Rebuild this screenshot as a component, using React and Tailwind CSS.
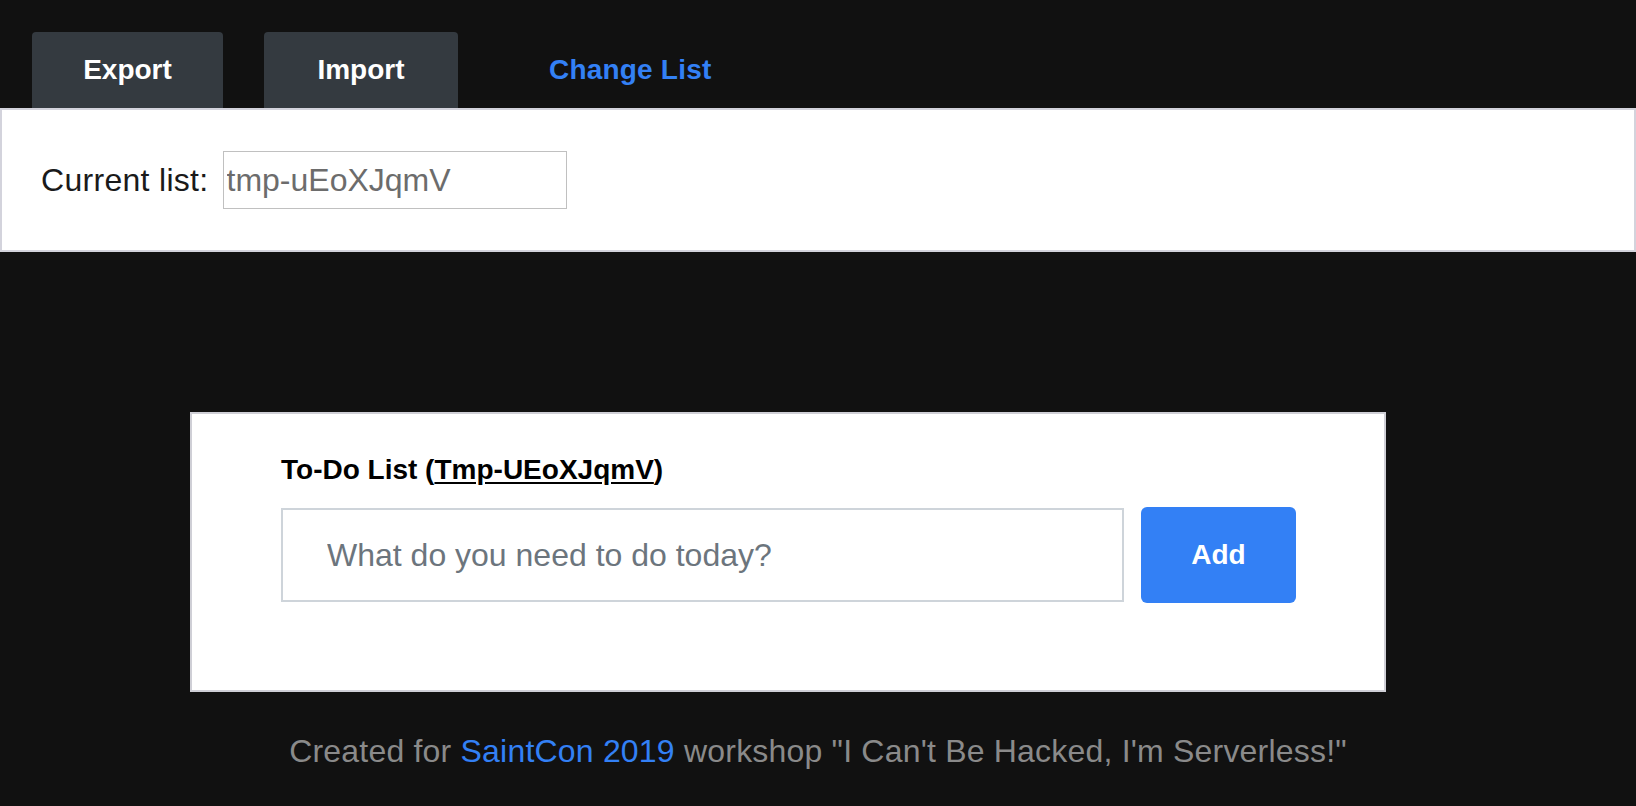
import React from 'react';

const font = { fontFamily: '"Liberation Sans", Arial, sans-serif' };

export default function App() {
    return (
        <div className="min-h-[806px] bg-[#111111] text-white" style={font}>
            <div className="flex items-end gap-[41px] pl-[32px] pt-[32px]">
                <button className="w-[191px] h-[76px] rounded-t-[4px] bg-[#343a40] text-[28px] font-bold text-white">
                    Export
                </button>
                <button className="w-[194px] h-[76px] rounded-t-[4px] bg-[#343a40] text-[28px] font-bold text-white">
                    Import
                </button>
                <button className="h-[76px] px-[50px] text-[28px] font-bold text-[#3380f5] tracking-[0.2px]">
                    Change List
                </button>
            </div>

            <div className="flex items-center h-[144px] bg-white border-2 border-[#d3d3dc] pl-[39px]">
                <label className="text-[32px] text-[#1a1a1a] leading-[38px] tracking-[0.3px]">Current list:</label>
                <input
                    className="ml-[14px] w-[344px] h-[58px] border border-[#c0c0c0] pl-[3px] text-[32px] text-[#6c6c6c] outline-none"
                    defaultValue="tmp-uEoXJqmV"
                    style={font}
                />
            </div>

            <div className="ml-[190px] mt-[160px] w-[1196px] h-[280px] bg-white border-2 border-[#cfcfd6] pl-[89px] pt-[39px]">
                <h2 className="text-[28px] leading-[34px] font-semibold text-black">
                    To-Do List (<span className="underline underline-offset-[3px]">Tmp-UEoXJqmV</span>)
                </h2>
                <div className="flex items-center mt-[20px]">
                    <input
                        className="w-[843px] h-[94px] border-2 border-[#ced4da] pl-[44px] text-[32px] text-[#495057] placeholder:text-[#6c757d] outline-none"
                        placeholder="What do you need to do today?"
                        style={font}
                    />
                    <button className="ml-[17px] w-[155px] h-[96px] rounded-[6px] bg-[#3380f5] text-[28px] font-bold text-white">
                        Add
                    </button>
                </div>
            </div>

            <p className="mt-[40px] text-center text-[32px] leading-[38px] text-[#8a8a8a] tracking-[0.2px]">
                Created for <a className="text-[#3380f5]">SaintCon 2019</a> workshop "I Can't Be Hacked, I'm Serverless!"
            </p>
        </div>
    );
}
